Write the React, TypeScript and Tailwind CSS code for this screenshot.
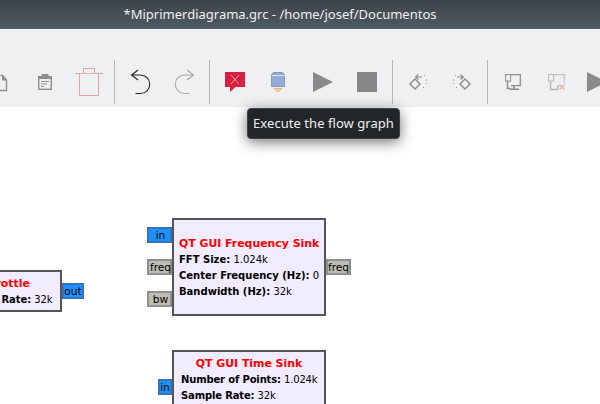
import React from "react";

const sans = "font-['Noto_Sans',sans-serif]";
const dejavu = "font-['DejaVu_Sans',sans-serif]";

function Sep() {
  return (
    <div className="flex w-[7px] shrink-0 justify-center">
      <div className="h-[44px] w-[1px] bg-[#b4b6b8]" />
    </div>
  );
}

function Tool({ children }: { children: React.ReactNode }) {
  return (
    <svg width="44" height="44" viewBox="0 0 44 44" fill="none" className="shrink-0">
      {children}
    </svg>
  );
}

function Port({ label, className }: { label: string; className: string }) {
  return (
    <div className={`absolute flex h-[16px] items-center justify-center border-2 pt-[2px] text-[10.67px] leading-none text-black ${dejavu} ${className}`}>
      {label}
    </div>
  );
}

function Row({ name, value, className }: { name: string; value: string; className?: string }) {
  return (
    <div className={`h-[16px] whitespace-nowrap text-[10px] leading-[16px] ${className ?? ""}`}>
      <span className="font-bold">{name}:</span> {value}
    </div>
  );
}

function Block({ className, title, rows, titleClass, rowClass }: { className: string; title: string; rows: string[][]; titleClass?: string; rowClass?: string }) {
  return (
    <div className={`absolute border-2 border-[#555555] bg-[#f1ecff] text-black ${dejavu} ${className}`}>
      <div className={`h-[16px] whitespace-nowrap text-center text-[10.9px] font-bold leading-[16px] text-[#ff0000] ${titleClass ?? ""}`}>{title}</div>
      {rows.map((r) => (
        <Row key={r[0]} name={r[0]} value={r[1]} className={rowClass} />
      ))}
    </div>
  );
}

export default function App() {
  return (
    <div className="relative flex h-[404px] w-[600px] flex-col overflow-hidden bg-white">
      {/* TITLE BAR */}
      <div className={`flex h-[29px] shrink-0 items-center justify-center bg-gradient-to-b from-[#3d4449] to-[#4f5a62] pr-[40px] text-[13px] text-[#eff0f1] ${sans}`}>
        *Miprimerdiagrama.grc - /home/josef/Documentos
      </div>

      {/* TOOLBAR */}
      <div className="ml-[-21px] flex h-[78px] w-[660px] shrink-0 items-center bg-[#eff0f1] pt-[28px]">
        <Tool>
          <path d="M21.500 15.500h2l4 4.500v10.500h-6.500" stroke="#8b8c8e" strokeWidth="1.4" />
          <path d="M23 15.500v5h4.500z" fill="#8b8c8e" />
        </Tool>
        <Tool>
          <rect x="15.700" y="16.700" width="12.600" height="12.600" stroke="#8b8c8e" strokeWidth="1.4" />
          <path d="M18.500 14h7v2h2.500v3H16v-3h2.500z" fill="#8b8c8e" />
          <path d="M18 21.500h8M18 24h6M18 26.500h3" stroke="#8b8c8e" />
        </Tool>
        <Tool>
          <path d="M8 13.500h28M16.500 13V8.500h11V13M12.500 14v21.500h19V14" stroke="#e8a0ac" strokeWidth="1" />
        </Tool>
        <Sep />
        <Tool>
          <path d="M13.500 15H22.500A9 9 0 0 1 22.500 33.500H17.500M20 10L13.500 15L20 20" stroke="#232629" strokeWidth="1.1" />
        </Tool>
        <Tool>
          <path d="M31.500 15H22.500A9 9 0 0 0 22.500 33.500H27.500M25 10L31.500 15L25 20" stroke="#a6a7a9" strokeWidth="1.1" />
        </Tool>
        <Sep />
        <Tool>
          <path d="M12 12h20v15H22.500L17 32v-5h-5z" fill="#da2040" />
          <path d="M18 15l8 9M26 15l-8 9" stroke="#f2a6b2" strokeWidth="1" />
        </Tool>
        <Tool>
          <path d="M14.500 26.500v-12l2-2h9l2 2v12z" fill="#94add4" stroke="#7e9bc8" />
          <path d="M15 15.500h13" stroke="#dbe3f0" />
          <path d="M16 28h10l-5 4.500z" fill="#f2b47a" />
          <path d="M19 29h4l-2 2z" fill="#f8e2c8" />
        </Tool>
        <Tool>
          <path d="M12 12l20 10-20 10z" fill="#8a8a8a" />
        </Tool>
        <Tool>
          <rect x="12" y="12" width="20" height="20" fill="#878787" />
        </Tool>
        <Sep />
        <Tool>
          <path d="M19 19l5 5-5 5-5-5z" stroke="#8e8f91" strokeWidth="1.5" />
          <path d="M26 17h-6M22.500 14.500l-3 2.500 3 2.500" stroke="#8e8f91" strokeWidth="1.1" />
          <path d="M28 15.500h1M30 20h1M30 23.500h1M27 27.500h1" stroke="#98999b" />
        </Tool>
        <Tool>
          <path d="M25 19l5 5-5 5-5-5z" stroke="#8e8f91" strokeWidth="1.5" />
          <path d="M17 17h6M20.500 14.500l3 2.500-3 2.500" stroke="#8e8f91" strokeWidth="1.1" />
          <path d="M15 15.500h1M13 20h1M13 23.500h1M16 27.500h1" stroke="#98999b" />
        </Tool>
        <Sep />
        <Tool>
          <path d="M20 14.700h9.300v11H20" stroke="#8b8c8e" strokeWidth="1.3" />
          <rect x="14.600" y="14.600" width="5" height="6.500" stroke="#8b8c8e" />
          <path d="M16.500 21v7.500h3" stroke="#8b8c8e" strokeWidth="1.4" />
          <path d="M23 26v3M19 29.300h9" stroke="#8b8c8e" strokeWidth="1.6" />
        </Tool>
        <Tool>
          <path d="M19 14.700h10.300v8" stroke="#c0c1c3" strokeWidth="1.2" />
          <rect x="13.600" y="14.600" width="5" height="6.500" stroke="#b6b7b9" />
          <path d="M15.500 21v8.500h7v-3h2" stroke="#b6b7b9" strokeWidth="1.4" />
          <path d="M24.500 24.500l5 5M29.500 24.500l-5 5" stroke="#f0a8b4" strokeWidth="1.3" />
        </Tool>
        <Tool>
          <path d="M8 12l20 10-20 10z" fill="#8a8a8a" />
        </Tool>
      </div>

      {/* CANVAS */}
      <div className="relative flex-1 bg-white">
        <Block
          className="left-[-52px] top-[163px] h-[42px] w-[114px] pt-[4px]"
          rowClass="pl-[7px] tracking-[-0.1px]"
          title="Throttle"
          rows={[["Sample Rate", "32k"]]}
        />
        <Port label="out" className="left-[62px] top-[176px] w-[22px] border-[#3474b8] bg-[#1e90ff]" />

        <Port label="in" className="left-[147px] top-[120px] w-[25px] border-[#3474b8] bg-[#1e90ff] pl-[2px]" />
        <Port label="freq" className="left-[147px] top-[152px] w-[25px] border-[#8f8f8f] bg-[#bebeb6] pl-[2px]" />
        <Port label="bw" className="left-[147px] top-[184px] w-[25px] border-[#8f8f8f] bg-[#bebeb6] pl-[2px]" />
        <Block
          className="left-[172px] top-[111px] h-[98px] w-[154px] pl-[5px] pt-[16px]"
          titleClass="text-left"
          title="QT GUI Frequency Sink"
          rows={[
            ["FFT Size", "1.024k"],
            ["Center Frequency (Hz)", "0"],
            ["Bandwidth (Hz)", "32k"],
          ]}
        />
        <Port label="freq" className="left-[326px] top-[152px] w-[25px] border-[#8f8f8f] bg-[#bebeb6]" />

        <Port label="in" className="left-[158px] top-[272px] w-[14px] border-[#3474b8] bg-[#1e90ff]" />
        <Block
          className="left-[172px] top-[243px] h-[70px] w-[154px] px-[7px] pt-[4px]"
          rowClass="tracking-[-0.15px]"
          title="QT GUI Time Sink"
          rows={[
            ["Number of Points", "1.024k"],
            ["Sample Rate", "32k"],
          ]}
        />
      </div>

      {/* TOOLTIP */}
      <div className={`absolute left-[247px] top-[108px] flex h-[31px] w-[153px] items-center justify-center rounded-[4px] border border-[#3f4347] bg-[#232629] pt-[1px] text-[13px] tracking-[0.05px] text-[#eff0f1] shadow-[0_3px_14px_rgba(0,0,0,0.55)] ${sans}`}>
        Execute the flow graph
      </div>
    </div>
  );
}
